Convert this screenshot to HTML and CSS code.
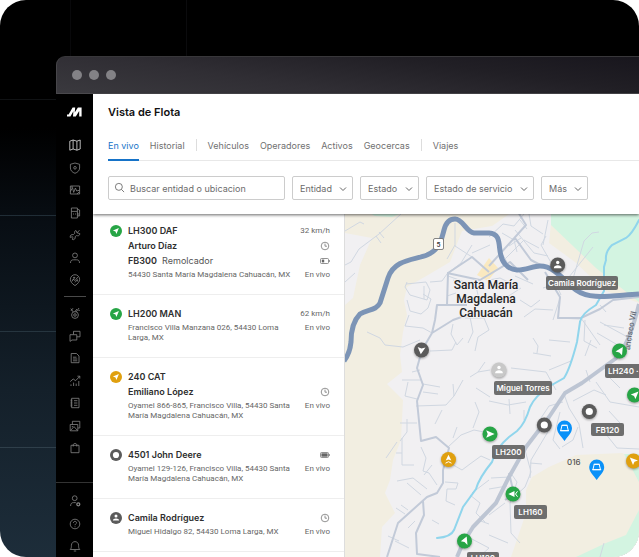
FILE: index.html
```html
<!DOCTYPE html>
<html lang="es">
<head>
<meta charset="utf-8">
<meta name="viewport" content="width=device-width, initial-scale=1">
<title>Vista de Flota</title>
<link rel="stylesheet" href="styles.css">
</head>
<body>
<svg class="defs" aria-hidden="true">
  <defs>
    <symbol id="clock" viewBox="0 0 10 10"><circle cx="5" cy="5" r="3.8"/><path d="M5 2.6V5.2H7"/></symbol>
    <symbol id="chevron" viewBox="0 0 8 8"><path d="M1 2.500 4 5.500 7 2.500"/></symbol>
    <symbol id="moving" viewBox="0 0 12 12"><circle cx="6" cy="6" r="6"/><path fill="#fff" d="M8.9 3.1 2.9 5.6 5.5 6.4 6.4 9z"/></symbol>
    <symbol id="stopped" viewBox="0 0 12 12"><circle cx="6" cy="6" r="6"/><circle cx="6" cy="6" r="3.1" fill="#fff"/></symbol>
    <symbol id="person" viewBox="0 0 12 12"><circle cx="6" cy="6" r="6"/><circle cx="6" cy="4.1" r="1.5" fill="#fff"/><path fill="#fff" d="M2.9 8.6c0-1.5 1.3-2.2 3.1-2.2s3.1.7 3.1 2.2z"/></symbol>
  </defs>
</svg>
<main class="stage">
  <div class="window">
    <div class="titlebar"><i></i><i></i><i></i></div>
    <div class="app">
      <nav class="rail" aria-label="Principal">
        <svg class="logo" viewBox="0 0 15 10"><path d="M0 9.5V7.6H1.6L5.6.6H8.2L7.7 5.6 10.9.6H14.6V9.5H12.2V4L8.8 9.5H6L6.4 4.2 3.4 9.5z"/></svg>
        <div class="group group-long">
          <a href="#" class="on" aria-label="Mapa"><svg viewBox="0 0 16 16"><path d="M2.8 4.2 6.1 3 9.9 4.2 13.2 3V12L9.9 13.2 6.1 12 2.8 13.2zM6.1 3V12M9.9 4.2V13.2"/></svg></a>
          <a href="#" aria-label="Seguridad"><svg viewBox="0 0 16 16"><path d="M8 3 12.6 4.3V8C12.6 10.6 10.6 12.4 8 13.3 5.4 12.4 3.4 10.6 3.4 8V4.3z"/><circle cx="8" cy="7.8" r="1.3"/></svg></a>
          <a href="#" aria-label="Diagnóstico"><svg viewBox="0 0 16 16"><path d="M3.4 4H12.6V12H3.4zM3.4 9.5 5.5 5.7 6.7 10.4 8.4 6 9.7 9 12.6 8.2M5 4V6M10 12 12 10"/></svg></a>
          <a href="#" aria-label="Combustible"><svg viewBox="0 0 16 16"><path d="M4.4 3H10.4V13H4.4zM4.4 6.4H10.4M10.4 4.2 12.6 5V11H11V8H10.4M6 9H7M8 9H9"/></svg></a>
          <a href="#" aria-label="Mantenimiento"><svg viewBox="0 0 16 16"><path d="M9 3.5 10 5.8 12.8 6.6C13 8.6 11 9.3 9.7 8.5L8.2 9.6C8.6 11.8 7 13.2 5.4 12.5L6 10.4 5.4 9.8 3.2 10.4C2.8 8.4 4.6 7 6.3 7.7L7.7 6.4C7.2 4.8 8 3.6 9 3.5zM10 5.8 12.5 3.2"/></svg></a>
          <a href="#" aria-label="Operadores"><svg viewBox="0 0 16 16"><circle cx="8" cy="5.4" r="2.4"/><path d="M3.5 13C3.5 10.6 4.6 9.8 6.5 9.8H9.5C11.4 9.8 12.5 10.6 12.5 13"/></svg></a>
          <a href="#" aria-label="Rutas"><svg viewBox="0 0 16 16"><path d="M8 13.6C5 11.6 3.4 9.8 3.4 7.3A4.6 4.6 0 0 1 12.6 7.3C12.6 9.8 11 11.6 8 13.6zM5 9.4 6.4 7 8 8.6 10.8 5M6 5.4H8L6 8M8 10.4 10.4 7.6V9.4"/></svg></a>
        </div>
        <hr>
        <div class="group group-long">
          <a href="#" aria-label="Reconocimientos"><svg viewBox="0 0 16 16"><circle cx="8" cy="10" r="3.4"/><circle cx="8" cy="10" r="1.3"/><path d="M6.3 7 3.8 3.6M9.3 6.8 12 3M4 5.8 6 3.2M10 4 8 6.4M11.4 5.4H12.8"/></svg></a>
          <a href="#" aria-label="Mensajes"><svg viewBox="0 0 16 16"><path d="M6.5 6.5V3.3H13V8.8H9.8M3 6.7H9.8V12H5L3 13.4z"/></svg></a>
          <a href="#" aria-label="Documentos"><svg viewBox="0 0 16 16"><path d="M4.2 3.5H9.5L12 6V12.7H4.2zM6 7.2H9.5M6 9H10.3M6 10.8H10.3"/></svg></a>
          <a href="#" aria-label="Reportes"><svg viewBox="0 0 16 16"><path d="M3.2 8.6 6.2 6 8.6 7.7 12.7 3.4M10.4 3.2H12.8V5.6M4 13V11.4M6.6 13V9.6M9.2 13V10.6M11.8 13V8"/></svg></a>
          <a href="#" aria-label="Registros"><svg viewBox="0 0 16 16"><path d="M4.6 3.3H12V12.7H4.6zM3.4 5.2H5.4M3.4 7.1H5.4M3.4 9H5.4M3.4 10.9H5.4M7 5.7H10.4M7 8H10.4M7 10.3H10.4"/></svg></a>
          <a href="#" aria-label="Tarjetas"><svg viewBox="0 0 16 16"><path d="M5.4 6.3V3.3H12.8V10H11M3.2 6.5H10.8V12.8H3.2zM3.6 12.4 7 8.6 10.4 12.4M4.8 8.6H6"/></svg></a>
          <a href="#" aria-label="Tienda"><svg viewBox="0 0 16 16"><path d="M4 5.3H12V12.7H4zM6.2 6.5V5C6.2 2.9 9.8 2.9 9.8 5V6.5"/></svg></a>
        </div>
        <hr class="wide">
        <div class="group group-short">
          <a href="#" aria-label="Administración"><svg viewBox="0 0 16 16"><circle cx="7.7" cy="5.2" r="2.4"/><path d="M3.6 13C3.6 10.5 4.8 9.6 6.5 9.6H8.8"/><circle cx="11.3" cy="11.3" r="1.5" stroke-width="1.3"/></svg></a>
          <a href="#" aria-label="Ayuda"><svg viewBox="0 0 16 16"><circle cx="8" cy="8" r="4.8"/><path d="M6.4 6.8C6.5 4.7 9.7 5 9.5 6.9 9.4 8 8 8 8 9.2M8 10.4V11.2"/></svg></a>
          <a href="#" aria-label="Avisos"><svg viewBox="0 0 16 16"><path d="M3.2 11.5C4.4 10.4 4.4 9 4.4 7.3 4.6 2.4 11.4 2.4 11.6 7.3 11.6 9 11.6 10.4 12.8 11.5zM6.8 13H9.2"/></svg></a>
        </div>
      </nav>
      <section class="content">
        <header class="head">
          <h1>Vista de Flota</h1>
          <nav class="tabs" aria-label="Vistas">
            <a href="#" class="active">En vivo</a>
            <a href="#">Historial</a>
            <span class="sep"></span>
            <a href="#">Vehículos</a>
            <a href="#">Operadores</a>
            <a href="#">Activos</a>
            <a href="#">Geocercas</a>
            <span class="sep"></span>
            <a href="#">Viajes</a>
          </nav>
          <form class="filters">
            <label class="search">
              <svg viewBox="0 0 12 12"><circle cx="5.3" cy="5.3" r="3.8"/><path d="M8.1 8.1 11 11"/></svg>
              <input type="search" placeholder="Buscar entidad o ubicacion" aria-label="Buscar entidad o ubicacion">
            </label>
            <label class="pick"><select aria-label="Entidad"><option>Entidad</option></select><svg><use href="#chevron"/></svg></label>
            <label class="pick"><select aria-label="Estado"><option>Estado</option></select><svg><use href="#chevron"/></svg></label>
            <label class="pick"><select aria-label="Estado de servicio"><option>Estado de servicio</option></select><svg><use href="#chevron"/></svg></label>
            <label class="pick"><select aria-label="Más"><option>Más</option></select><svg><use href="#chevron"/></svg></label>
          </form>
        </header>
        <div class="workspace">
          <ul class="list">
            <li>
              <svg class="state green"><use href="#moving"/></svg>
              <div class="info">
                <div class="line"><h2>LH300 DAF</h2><span class="meta">32 km/h</span></div>
                <div class="line"><h2>Arturo Díaz</h2><svg class="clock"><use href="#clock"/></svg></div>
                <div class="line"><h2>FB300 <span>Remolcador</span></h2><svg class="battery" viewBox="0 0 10 6"><rect x=".5" y=".5" width="8" height="5" rx="1"/><path d="M9.6 2V4"/><rect class="fill" x="1.8" y="1.6" width="2.4" height="2.8"/></svg></div>
                <div class="place"><p>54430 Santa María Magdalena Cahuacán, MX</p><span class="meta">En vivo</span></div>
              </div>
            </li>
            <li>
              <svg class="state green"><use href="#moving"/></svg>
              <div class="info">
                <div class="line"><h2>LH200 MAN</h2><span class="meta">62 km/h</span></div>
                <div class="place"><p>Francisco Villa Manzana 026, 54430 Loma Larga, MX</p><span class="meta">En vivo</span></div>
              </div>
            </li>
            <li>
              <svg class="state amber"><use href="#moving"/></svg>
              <div class="info">
                <div class="line"><h2>240 CAT</h2></div>
                <div class="line"><h2>Emiliano López</h2><svg class="clock"><use href="#clock"/></svg></div>
                <div class="place"><p>Oyamel 866-865, Francisco Villa, 54430 Santa María Magdalena Cahuacán, MX</p><span class="meta">En vivo</span></div>
              </div>
            </li>
            <li>
              <svg class="state dark"><use href="#stopped"/></svg>
              <div class="info">
                <div class="line"><h2>4501 John Deere</h2><svg class="battery" viewBox="0 0 10 6"><rect x=".5" y=".5" width="8" height="5" rx="1"/><path d="M9.6 2V4"/><rect class="fill" x="1.4" y="1.3" width="6.2" height="3.4"/></svg></div>
                <div class="place"><p>Oyamel 129-126, Francisco Villa, 54430 Santa María Magdalena Cahuacán, MX</p><span class="meta">En vivo</span></div>
              </div>
            </li>
            <li>
              <svg class="state dark"><use href="#person"/></svg>
              <div class="info">
                <div class="line"><h2>Camila Rodríguez</h2><svg class="clock"><use href="#clock"/></svg></div>
                <div class="place"><p>Miguel Hidalgo 82, 54430 Loma Larga, MX</p><span class="meta">En vivo</span></div>
              </div>
            </li>
          </ul>
          <div class="map">
            <svg viewBox="345 212 294 345" preserveAspectRatio="xMinYMin slice" role="img" aria-label="Mapa de la flota">
              <g class="land">
                <path class="cream" d="M345 212H512L492 226 462 231 450 262 428 275 407 287 404 300 407 315 403 332 400 355 402 372 387 384 403 400 401 440 393 460 390 480 385 493 395 513 382 527 380 557H345z"/>
                <path class="base" d="M345 233 372 238 360 265 353 298 345 305z"/>
                <path class="mint" d="M368 212H404L392 217 375 216z"/>
                <path class="cream" d="M551 212V224L549 243 575 262 606 291 639 303V212z"/>
                <path class="mint" d="M551 212V225L596 268 639 302V212z"/>
                <path class="cream" d="M511 557 526 513V490L532 477 549 467 576 455 622 453 639 462V557z"/>
                <path class="mint" d="M624 454H639V482zM576 557 606 543 626 535 639 510V557z"/>
                <path class="yellow" d="M477 275 489 258 498 268 488 281z"/>
              </g>
              <g class="minor">
                <path d="M345 231 360 222 364 224M345 265 351 262 359 249 379 234 401 214M376 236 381 243M379 232 384 238M345 282 355 273"/>
                <path d="M406 284 426 282 430 290 427 300 410 295 405 287 407 282M407 300 410 311 421 314 428 308 431 299 423 294M424 286V299M430 282 442 281 447 274M409 315 405 326 423 328 432 333M367 332 380 338 385 345 403 347 420 340M455 223V246L472 257M448 273 461 263 472 245M455 245 447 259M472 253 490 245M448 276 476 286 480 304M453 280 466 286M447 296 456 293M453 324 451 334 457 345 463 338M470 317 473 332 468 343M430 351 452 350 456 342M465 318 484 318 489 330 478 337 475 351M485 362 478 372 470 377M478 372 490 370"/>
                <path d="M412 372 420 370M402 380H422M408 382 405 396 417 399M423 392 438 394M423 384 440 387M416 406 446 405 454 396 453 384M442 410 435 424M454 396 463 380M476 388 490 397M475 402 479 412 473 428M400 423H417M407 419V432L400 441M397 442 386 458M402 438V465H414M396 453H402M397 481 413 478 427 489M407 483 421 495M421 447 426 458 423 471 429 473 437 485M432 465 424 475M448 447 461 435 474 430 489 433M457 427 453 438M448 462 462 470 470 464 481 456 490 460M445 482 458 483 456 489 447 489 446 501 455 505M401 505 408 510M396 508 405 514M415 521 408 528M388 536 399 541M395 541 409 548M432 520 439 524M470 495 480 503 476 513 485 522M489 480 472 493"/>
                <path d="M489 237 503 224 514 226 524 214M515 230 534 253 548 256M520 220 527 229M529 214 531 226 543 234M546 236 541 245 553 266M548 220 543 245M502 233 514 240 517 252M503 261 524 240 539 248M515 276 533 284M520 300 531 307 540 300M524 317 535 309 553 310M543 288 556 284 561 295M560 298 553 320M557 318 579 319M570 289 584 241 592 233 599 232M569 277 593 247M533 338 538 346 537 353M549 340 570 342M533 353 551 356M549 370 571 361M511 368 546 372 556 390M581 318 600 345M585 320 584 341 597 348M600 322 633 340M597 333 616 344M591 340 585 356M604 325 624 328"/>
                <path d="M489 401 508 405 526 402M509 399 510 414M524 420 524 410M539 421 549 406 563 402M564 394 569 408 579 424 583 448M573 401 594 390 606 395M596 382 610 402 639 407M560 412 553 440 560 449M578 427 573 440 562 447M601 428 617 448 639 449M609 411 620 423M491 478 510 477M489 489 507 486M510 472 517 482 510 503 511 533 520 543M525 450 531 472 525 487 513 498M489 515 505 503M489 535 508 543M552 425 531 460 530 478M530 463 542 464M604 543 600 557M470 538 489 548 479 557M478 520 489 524"/>
                <path d="M493 295 507 297 521 288M489 280 500 278 508 282M500 250 507 262M521 238 509 246M600 305 606 312M586 370 590 382M610 378 620 388M596 374 606 366"/>
              </g>
              <g class="middle">
                <path d="M467 305H437L435 320 432 333 422 350 417 368 423 385 417 401 421 441 436 437 449 448 443 470V483L437 493 427 497 398 523 387 557M432 333 453 320 470 314M447 305 448 273 472 257 489 272M423 501 424 515 416 533 417 554 440 557M447 273 480 280 510 262 528 280M489 266 526 225 518 212M545 272 560 297 558 318 581 318 600 309 613 300 639 297M515 238 531 260 546 268M552 270 564 282M505 500 514 494 509 473"/>
              </g>
              <path class="major" d="M639 304C634 325 626 349 615 359L582 383 565 393 549 417 526 447 509 477 496 503 473 527 463 543 457 557"/>
              <path class="river" d="M639 220Q632 234 626 238L612 245Q605 252 606 260L604 267V291L596 305Q581 314 580 322L577 342Q570 369 564 378L550 386Q535 396 530 407 525 424 517 431L509 437Q496 448 492 462 479 478 476 489L463 507 454 530Q451 537 437 538"/>
              <path class="highway" d="M344 361Q350 353 351 342C351 330 354 320 360 314 367 309 376 311 380 303L388 278C394 259 415 260 427 255 440 249 441 241 444 230 446 222 450 219 455 219 463 219 466 232 474 233H489C505 234 495 253 505 264 515 276 530 266 540 266 555 266 565 282 576 290 590 300 608 296 639 294"/>
              <g class="shield"><rect x="433.500" y="238.500" width="10" height="11" rx="1.500"/><text x="438.500" y="247">5</text></g>
              <g class="town"><text x="486" y="289">Santa María</text><text x="486" y="303">Magdalena</text><text x="486" y="317">Cahuacán</text></g>
              <path id="street" d="M630 350Q632 330 639 302" fill="none"/>
              <text class="street"><textPath href="#street">ancisco Vil</textPath></text>
              <text class="route" x="567" y="465">016</text>
              <g class="markers">
                <g class="dark"><circle cx="421.500" cy="350" r="7.500"/><path class="glyph" d="M417.700 347 421.500 348.500 425.500 347.500 420.800 354.300z"/></g>
                <g class="dark"><circle cx="557.700" cy="265" r="7.500"/><circle class="glyph" cx="557.700" cy="262.500" r="1.700"/><path class="glyph" d="M553.800 268.200C553.800 264.400 561.600 264.400 561.600 268.200z"/></g>
                <g class="pale"><circle cx="499" cy="370" r="7.500"/><circle class="glyph" cx="499" cy="367.500" r="1.700"/><path class="glyph" d="M495.100 373.200C495.100 369.400 502.900 369.400 502.900 373.200z"/></g>
                <g class="green"><circle cx="619.500" cy="351" r="7.500"/><path class="glyph" d="M622.800 347 615.500 351.500 619.300 352.500 622 355.300z"/></g>
                <g class="green"><circle cx="634.500" cy="395" r="7.500"/><path class="glyph" d="M638.500 391.500 630.800 394.500 634 396 635.500 399z"/></g>
                <g class="green"><circle cx="490" cy="434" r="7.500"/><path class="glyph" d="M486.200 430.300 494.600 434 486.200 437.700 487.700 434z"/></g>
                <g class="amber"><circle cx="448.500" cy="459.500" r="7.500"/><path class="glyph" d="M448.500 454.800 451.300 460.500 448.500 459.400 445.700 460.500z"/><path class="marks" d="M445.500 463.200 448.500 461.700 451.500 463.200"/></g>
                <g class="dark"><circle cx="544.300" cy="425" r="7.500"/><circle class="glyph" cx="544.300" cy="425" r="3.600"/></g>
                <g class="dark"><circle cx="589.300" cy="411.500" r="7.500"/><circle class="glyph" cx="589.300" cy="411.500" r="3.600"/></g>
                <g class="amber"><circle cx="633.500" cy="461" r="7.500"/><path class="glyph" d="M629.800 457.500 638 460.500 634.500 461.700 633 465z"/></g>
                <g class="green"><circle cx="513" cy="494" r="7.500"/><path class="glyph" d="M508.300 494 514.500 491V497z"/><path class="marks" d="M517.500 491.300 515.500 494 517.500 496.700"/></g>
                <g class="green"><circle cx="464.500" cy="541" r="7.500"/><path class="glyph" d="M466.700 536.500 460.800 541.300 464.500 542 467.500 545z"/></g>
              </g>
              <g class="pins">
                <path d="M564.500 441C561 436 557 433 557 428A7.500 7.500 0 0 1 572 428C572 433 568 436 564.500 441z"/><path class="fence" d="M562 425.300H567L568.300 430.700H560.700zM561.500 425.300H567.500M560 430.700H569"/>
                <path d="M596.700 480C593.200 475 589.200 472 589.200 467A7.500 7.500 0 0 1 604.200 467C604.200 472 600.200 475 596.700 480z"/><path class="fence" d="M594.200 464.300H599.200L600.500 469.700H592.900zM593.700 464.300H599.700M592.200 469.700H601.200"/>
              </g>
              <g class="labels">
                <rect x="546" y="276" width="72" height="14" rx="2"/><text x="582" y="286">Camila Rodríguez</text>
                <rect x="494" y="381" width="58" height="14" rx="2"/><text x="523" y="391">Miguel Torres</text>
                <rect x="605" y="364" width="56" height="14" rx="2"/><text class="start" x="608" y="374">LH240 ·</text>
                <rect x="591" y="423" width="33" height="13" rx="2"/><text x="607.500" y="433">FB120</text>
                <rect x="492" y="445" width="33" height="14" rx="2"/><text x="508.500" y="455">LH200</text>
                <rect x="514" y="505" width="33" height="14" rx="2"/><text x="530.500" y="515">LH160</text>
                <rect x="467" y="552" width="32" height="14" rx="2"/><text x="483" y="561">LH180</text>
              </g>
            </svg>
          </div>
        </div>
      </section>
    </div>
  </div>
</main>
</body>
</html>
```
FILE: styles.css
```css
* { box-sizing: border-box; }
body { margin: 0; background: #fff; font-family: Inter, "Liberation Sans", sans-serif; }
h1, h2, p, ul { margin: 0; padding: 0; }
a { color: inherit; text-decoration: none; }
.defs { position: absolute; width: 0; height: 0; }

.stage {
  height: 100vh;
  overflow: hidden;
  border-radius: 26px;
  padding: 56px 0 0 56px;
  background:
    linear-gradient(#202d36, #202d36) 0 215px / 100% 1px no-repeat,
    linear-gradient(#26353f, #26353f) 0 331px / 100% 1px no-repeat,
    linear-gradient(#2f3f4a, #2f3f4a) 0 447px / 100% 1px no-repeat,
    linear-gradient(#101214, #101214) 0 99px / 100% 1px no-repeat,
    linear-gradient(#08080a, #08080a) 70px 0 / 1px 56px no-repeat,
    linear-gradient(#0b0b0d, #0b0b0d) 186px 0 / 1px 56px no-repeat,
    linear-gradient(#000 0, #000 23%, #080e14 40%, #14202a 70%, #1d2d3a 100%);
}
.window { display: flex; flex-direction: column; height: 100%; }
.titlebar {
  display: flex;
  flex: none;
  align-items: center;
  gap: 7px;
  height: 38px;
  padding-left: 15px;
  border-top: 1px solid #38373a;
  border-left: 1px solid #47464a;
  border-bottom: 1px solid #4a494d;
  border-top-left-radius: 9px;
  background: linear-gradient(8deg, #3a393e, #302e34 35%, #211f25 70%, #18161d);
}
.titlebar i { width: 10px; height: 10px; border-radius: 50%; background: #838286; }
.app { display: flex; flex: 1; min-height: 0; }

.rail { display: flex; flex: none; flex-direction: column; align-items: center; width: 37px; padding-top: 13px; background: #000; }
.logo { flex: none; width: 15px; height: 10px; fill: #fff; margin-bottom: 20px; }
.group { display: flex; flex: none; flex-direction: column; justify-content: space-between; }
.group-long { height: 151px; }
.group-short { height: 61px; }
.group a { display: block; height: 16px; color: #858585; }
.group a.on { color: #e6e6e6; }
.group svg { display: block; width: 16px; height: 16px; fill: none; stroke: currentColor; stroke-width: 0.8; stroke-linejoin: round; }
.rail hr { flex: none; width: 22px; height: 1px; margin: 8px 0; border: 0; background: #4a4a4a; }
.rail hr.wide { width: 100%; margin: 26px 0 10px; background: #333; }

.content { display: flex; flex: 1; flex-direction: column; min-width: 0; background: #fff; }
.head { position: relative; z-index: 1; flex: none; padding: 10px 0 14px 15px; background: #fff; box-shadow: 0 1px 3px rgba(0, 0, 0, 0.6); }
h1 { font-size: 11px; line-height: 16px; font-weight: 600; color: #111; }
.tabs { display: flex; align-items: center; gap: 11px; height: 31px; margin-top: 10px; margin-bottom: 15px; border-bottom: 1px solid #e8e8e8; font-size: 9px; line-height: 31px; color: #707070; white-space: nowrap; }
.tabs a { height: 31px; }
.tabs .active { color: #1673c8; border-bottom: 2px solid #1673c8; }
.sep { width: 1px; height: 12px; background: #ddd; }
.filters { display: flex; gap: 7px; height: 24px; font-size: 9px; }
.search { position: relative; flex: 0 1 177px; }
.search svg { position: absolute; left: 6px; top: 6px; width: 11px; height: 11px; fill: none; stroke: #707070; stroke-width: 1; }
.search input, .pick select { height: 24px; border: 1px solid #ccc; border-radius: 2px; background: #fff; color: #6c6c6c; font: inherit; appearance: none; outline: 0; }
.search input { width: 100%; padding: 0 6px 0 21px; }
.search input::placeholder { color: #6c6c6c; opacity: 1; }
.pick { position: relative; flex: none; }
.pick select { padding: 0 20px 0 7px; }
.pick svg { position: absolute; right: 6px; top: 9px; width: 8px; height: 8px; fill: none; stroke: #666; pointer-events: none; }

.workspace { display: flex; flex: 1; min-height: 0; margin-top: -2px; }
.list { flex: none; width: 252px; overflow: hidden; list-style: none; border-right: 1px solid #ddd; background: #fff; }
.list li { display: flex; gap: 6px; padding: 11px 14px 14px 17px; border-bottom: 1px solid #eee; }
.state { flex: none; width: 12px; height: 12px; margin-top: 2px; }
.info { flex: 1; min-width: 0; }
.line { display: flex; align-items: center; justify-content: space-between; height: 15px; }
h2 { font-size: 9px; line-height: 15px; font-weight: 600; color: #2e2e2e; }
h2 span { margin-left: 3px; font-weight: 400; color: #555; }
.meta, .place { font-family: Roboto, "Liberation Sans", sans-serif; font-size: 8px; line-height: 10px; color: #666; }
.meta { flex: none; }
.place { display: flex; justify-content: space-between; gap: 6px; margin-top: 2px; }
.clock, .battery { width: 10px; height: 10px; fill: none; stroke: #777; stroke-width: 0.8; }
.battery { height: 6px; }
.battery .fill { fill: #666; stroke: none; }
.green { fill: #27a546; }
.amber { fill: #e0a00f; }
.dark { fill: #5b5b5b; }
.pale { fill: #c8c8c8; }

.map { flex: 1; min-width: 0; overflow: hidden; background: #f1f0f2; }
.map > svg { display: block; width: 100%; height: 100%; }
.cream { fill: #f2eee1; }
.base { fill: #f1f0f2; }
.mint { fill: #d3f4e1; }
.yellow { fill: #fae9c0; }
.minor, .middle { fill: none; stroke: #d0d7e1; stroke-width: 1; stroke-linejoin: round; }
.middle { stroke: #c2cad8; stroke-width: 2; }
.major { fill: none; stroke: #bdc5d3; stroke-width: 4; stroke-linejoin: round; }
.river { fill: none; stroke: #90d5ec; stroke-width: 2; stroke-linecap: round; }
.highway { fill: none; stroke: #7c94b6; stroke-width: 5; }
.shield rect { fill: #fff; stroke: #666; stroke-width: 0.8; }
.shield text { font: 500 7px Roboto, sans-serif; text-anchor: middle; fill: #333; }
.town { font: 500 12px Roboto, sans-serif; text-anchor: middle; fill: #252525; stroke: #f1f0f2; stroke-width: 2; paint-order: stroke; }
.street { font: 500 8px Roboto, sans-serif; fill: #656b75; }
.route { font: 500 8px Inter, sans-serif; fill: #555; }
.markers > g { filter: drop-shadow(0 1px 1px rgba(0, 0, 0, 0.35)); }
.glyph { fill: #fff; }
.marks, .fence { fill: none; stroke: #fff; stroke-width: 1; }
.pins { fill: #0a91f8; }
.pins .fence { fill: none; }
.labels rect { fill: #666; fill-opacity: 0.95; }
.labels text { font: 600 8px Inter, sans-serif; fill: #fff; text-anchor: middle; }
.labels .start { text-anchor: start; }
```
